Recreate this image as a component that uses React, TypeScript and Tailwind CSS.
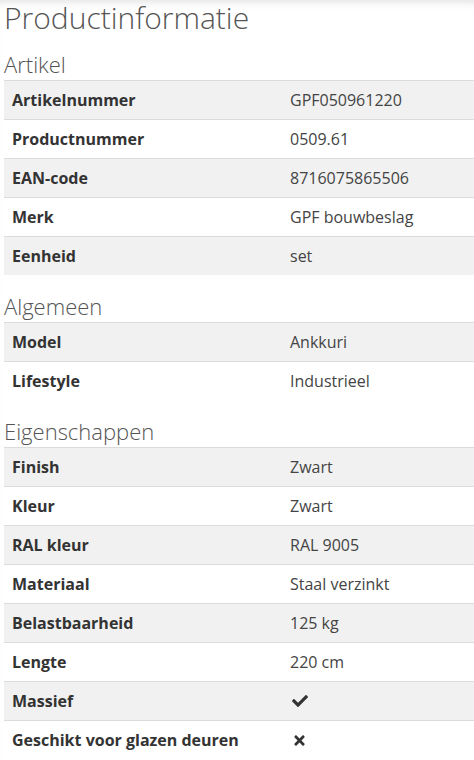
import React from "react";
import { FaCheck, FaTimes } from "react-icons/fa";

type Row = { label: string; value: React.ReactNode };

const groups: { title: string; rows: Row[] }[] = [
  {
    title: "Artikel",
    rows: [
      { label: "Artikelnummer", value: "GPF050961220" },
      { label: "Productnummer", value: "0509.61" },
      { label: "EAN-code", value: "8716075865506" },
      { label: "Merk", value: "GPF bouwbeslag" },
      { label: "Eenheid", value: "set" },
    ],
  },
  {
    title: "Algemeen",
    rows: [
      { label: "Model", value: "Ankkuri" },
      { label: "Lifestyle", value: "Industrieel" },
    ],
  },
  {
    title: "Eigenschappen",
    rows: [
      { label: "Finish", value: "Zwart" },
      { label: "Kleur", value: "Zwart" },
      { label: "RAL kleur", value: "RAL 9005" },
      { label: "Materiaal", value: "Staal verzinkt" },
      { label: "Belastbaarheid", value: "125 kg" },
      { label: "Lengte", value: "220 cm" },
      { label: "Massief", value: <FaCheck className="ml-[2px] text-[16px] text-[#333]" /> },
      { label: "Geschikt voor glazen deuren", value: <FaTimes className="ml-[2px] text-[15px] text-[#333]" /> },
    ],
  },
];

const App = () => {
  return (
    <div className="min-h-screen bg-white pl-1 font-['Open_Sans',sans-serif] text-[#333] shadow-[inset_0_8px_8px_-6px_rgba(0,0,0,0.12)]">
      <h2 className="text-[30px] font-light leading-[36px] text-[#555]">Productinformatie</h2>

      {groups.map((g, gi) => (
        <section key={g.title} className={gi === 0 ? "mt-[14px]" : "mt-[17px]"}>
          <h3 className="mb-[2px] text-[22px] font-light leading-[28px] text-[#555]">{g.title}</h3>
          <div>
            {g.rows.map((r, i) => (
              <div
                key={r.label}
                className={`flex h-[39px] items-center border-t border-[#dcdce0] text-[16px] ${
                  i % 2 === 0 ? "bg-[#f1f1f1]" : "bg-white"
                }`}
              >
                <div className="w-[286px] px-2 font-bold text-[#333]">{r.label}</div>
                <div className="flex-1 text-[#444]">{r.value}</div>
              </div>
            ))}
          </div>
        </section>
      ))}
    </div>
  );
};

export default App;
